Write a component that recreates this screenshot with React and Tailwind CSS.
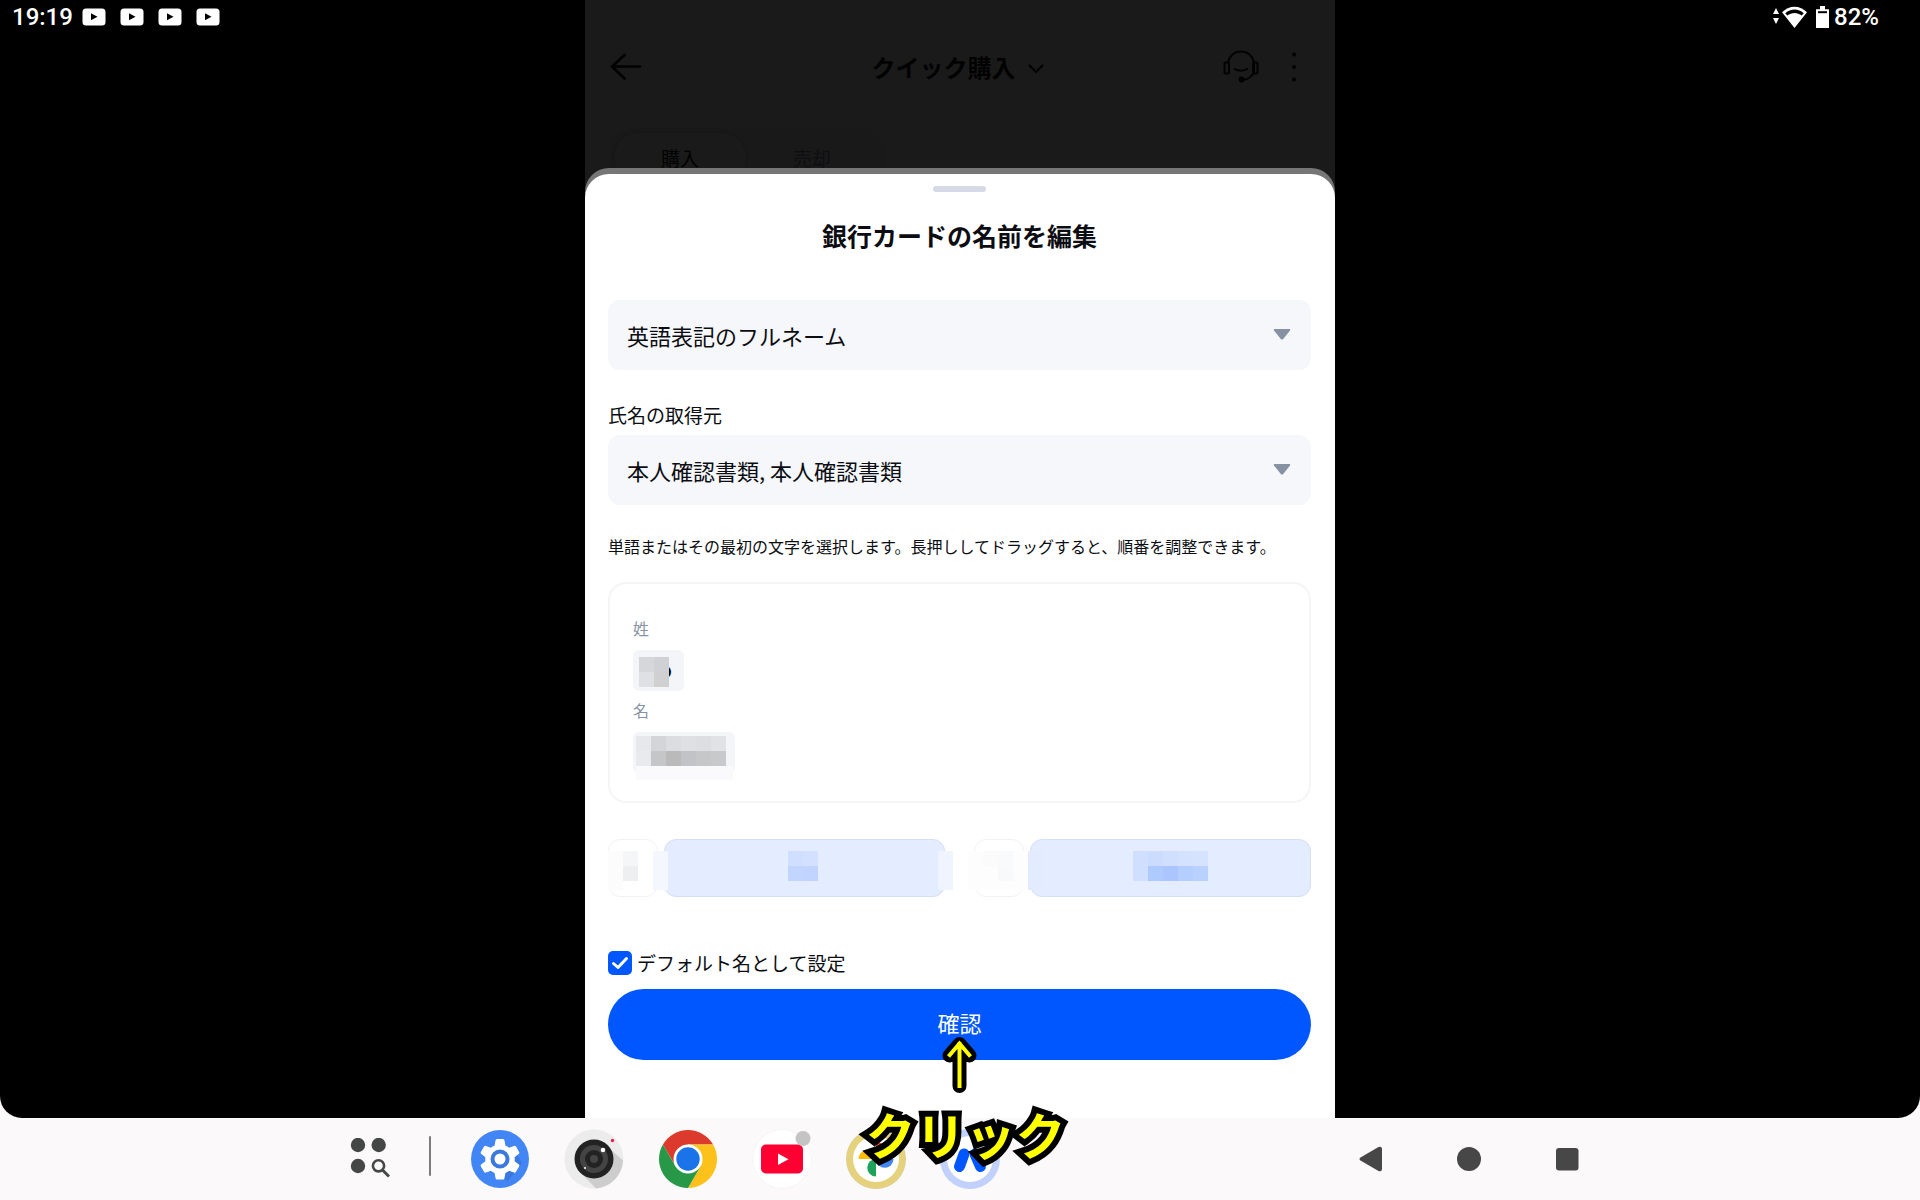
const clock = "19:19"
const battery = "82%"

// pixelated cells that hide personal data
function Mosaic({ rows, className }) {
    return (
        <span className={`absolute flex flex-col ${className}`} aria-hidden="true">
            {rows.map((row, i) => (
                <span key={i} className="flex">
                    {row.map((cell, j) => (
                        <span key={j} className={`block size-[15px] ${cell}`} />
                    ))}
                </span>
            ))}
        </span>
    )
}

function YoutubeBadge() {
    return (
        <svg width="24" height="18" viewBox="0 0 24 18">
            <rect x="0.5" y="0.5" width="23" height="17" rx="3.5" fill="#fff" />
            <path d="M9 5.2v7l6.5-3.5z" fill="#000" />
        </svg>
    )
}

function StatusBar() {
    return (
        <div className="absolute inset-x-0 top-0 z-10 flex h-[34px] items-center justify-between pl-3 pr-[41px] font-['Roboto',sans-serif] text-2xl font-medium text-white">
            <div className="flex items-center">
                <span className="mr-[9px]">{clock}</span>
                <div className="flex gap-[14px]">
                    <YoutubeBadge />
                    <YoutubeBadge />
                    <YoutubeBadge />
                    <YoutubeBadge />
                </div>
            </div>
            <div className="flex items-center">
                <svg width="57" height="24" viewBox="0 0 57 24" fill="#fff" className="mr-[5px]">
                    <path d="M4 3l3 6H1zM1 13h6l-3 6z" />
                    <path d="M10 7.3C17-.2 28-.2 35 7.3L22.5 23z" />
                    <path d="M13.3 8.2c5.5-5 13-5 18.4 0L29.7 10.5c-4.2-3.4-10.2-3.4-14.4 0z" fill="#000" />
                    <path d="M44 4.2h4V1h5v3.200h4V23H44z" />
                    <path d="M46 6.2h9v2h-9z" fill="#000" />
                </svg>
                <span>{battery}</span>
            </div>
        </div>
    )
}

function DimmedPage() {
    return (
        <div className="h-[168px] overflow-hidden pt-[33px] text-[#020202]">
            <header className="grid h-[68px] grid-cols-3 items-center pl-[25px] pr-[38px]">
                <button type="button" aria-label="戻る" className="justify-self-start">
                    <svg width="32" height="28" viewBox="0 0 32 28" fill="none" stroke="currentColor" strokeWidth="2.6" strokeLinecap="round">
                        <path d="M30 13.5H2M14.5 2L2 13.5 14.5 25.5" />
                    </svg>
                </button>
                <button type="button" className="flex items-center justify-center gap-3 whitespace-nowrap pl-2 text-2xl font-bold">
                    クイック購入
                    <svg width="16" height="10" viewBox="0 0 16 10" fill="none" stroke="currentColor" strokeWidth="2" className="mt-1">
                        <path d="M1 1l7 7 7-7" />
                    </svg>
                </button>
                <div className="flex items-center gap-[32px] justify-self-end">
                    <button type="button" aria-label="サポート">
                        <svg width="36" height="36" viewBox="0 0 36 36" fill="none" stroke="currentColor" strokeWidth="2">
                            <path d="M5 13C7 6 12 2.5 18 2.5S29 6 31 13v10c-1.5 4-5 7-11 8" />
                            <rect x="1.5" y="13.5" width="4.5" height="11" rx="1" />
                            <rect x="30" y="13.5" width="4.5" height="11" rx="1" />
                            <path d="M11 19.5c4 3 10 3 14 0" />
                            <circle cx="18.5" cy="30.5" r="3" fill="currentColor" stroke="none" />
                        </svg>
                    </button>
                    <button type="button" aria-label="メニュー">
                        <svg width="6" height="30" viewBox="0 0 6 30" fill="currentColor">
                            <circle cx="3" cy="2.5" r="2" />
                            <circle cx="3" cy="15" r="2" />
                            <circle cx="3" cy="27.5" r="2" />
                        </svg>
                    </button>
                </div>
            </header>
            <div className="ml-6 mt-[27px] flex w-[274px] rounded-[26px] bg-[#191919] p-[5px] text-[19px] leading-5">
                <button type="button" className="h-[50px] flex-1 rounded-3xl bg-[#1a1a1a] shadow-[0_0_3px_#141414]">購入</button>
                <button type="button" className="h-[50px] flex-1 text-[#0e0f11]">売却</button>
            </div>
        </div>
    )
}

function SelectField({ id, label, value }) {
    return (
        <div className="relative">
            <select id={id} aria-label={label} className="block h-[70px] w-full appearance-none rounded-xl bg-[#f6f7fa] pl-[19px] pr-14 text-[22px] text-[#0b0d12]">
                <option>{value}</option>
            </select>
            <svg width="18" height="11" viewBox="0 0 18 11" className="pointer-events-none absolute right-5 top-[29px]">
                <path d="M1.5 0h15q1.2.3.5 1.4l-7 8.8q-1 .8-2 0L1 1.4Q.3.3 1.5 0z" fill="#8691a3" />
            </svg>
        </div>
    )
}

function NameBox() {
    return (
        <section className="mt-6 rounded-[18px] border-2 border-[#f4f5f6] pb-[28px] pl-[23px] pt-8 leading-6 text-[#8a93a5]">
            <p>姓</p>
            <div className="relative mt-[10px] flex h-[41px] w-[51px] items-center justify-end rounded-md bg-[#f4f5f9] pb-[6px] pr-3 text-[22px] text-black">
                o
                <Mosaic
                    className="left-[6px] top-[7px]"
                    rows={[
                        ["bg-[#d6d7da]", "bg-[#d0d1d4]"],
                        ["bg-[#dfe0e4]", "bg-[#d0d0d1]"],
                    ]}
                />
            </div>
            <p className="mt-[7px]">名</p>
            <div className="relative mt-[10px] h-[41px] w-[102px] rounded-md bg-[#f4f5f9]">
                <span className="absolute left-[3px] top-[34px] h-[14px] w-[97px] bg-[#fafafc]" />
                <Mosaic
                    className="left-[3px] top-1"
                    rows={[
                        ["bg-[#e7e8ec]", "bg-[#d4d5d8]", "bg-[#dcdde1]", "bg-[#dfe0e4]", "bg-[#dddee2]", "bg-[#e1e2e6]"],
                        ["bg-[#e9eaee]", "bg-[#c5c6c8]", "bg-[#bababb]", "bg-[#c2c3c6]", "bg-[#c6c7c8]", "bg-[#c8c9cb]"],
                    ]}
                />
            </div>
        </section>
    )
}

function NameParts() {
    return (
        <div className="mt-9 grid grid-cols-2 gap-[29px]">
            <div className="relative flex gap-[6px]">
                <button type="button" aria-label="姓の頭文字" className="relative h-[58px] w-[50px] rounded-xl border border-[#f1f2f6]">
                    <span className="absolute -left-px top-[11px] h-[39px] w-[15px] bg-[#fcfcfd]" />
                    <Mosaic className="left-[14px] top-[11px]" rows={[["bg-[#f5f6f8]"], ["bg-[#eeeff1]"]]} />
                </button>
                <button type="button" aria-label="姓" className="relative h-[58px] flex-1 rounded-xl border border-[#d4e0f6] bg-[#e4edff]">
                    <Mosaic
                        className="left-[123px] top-[11px]"
                        rows={[
                            ["bg-[#d0deff]", "bg-[#d3e0ff]"],
                            ["bg-[#c2d5ff]", "bg-[#c0d4ff]"],
                        ]}
                    />
                </button>
                <span className="absolute left-[45px] top-3 h-[39px] w-[15px] bg-[#f4f7fe]" />
                <span className="absolute -right-2 top-3 h-[39px] w-[15px] bg-[#eff4ff]" />
            </div>
            <div className="relative flex gap-[6px]">
                <button type="button" aria-label="名の頭文字" className="h-[58px] w-[50px] rounded-xl border border-[#f1f2f6]" />
                <button type="button" aria-label="名" className="relative h-[58px] flex-1 rounded-xl border border-[#d4e0f6] bg-[#e4edff]">
                    <Mosaic
                        className="left-[102px] top-[11px]"
                        rows={[
                            ["bg-[#d0dfff]", "bg-[#cbdcff]", "bg-[#d1dfff]", "bg-[#d4e1ff]", "bg-[#d5e3ff]"],
                            ["bg-[#d0dfff]", "bg-[#afcaff]", "bg-[#abc6ff]", "bg-[#b4ceff]", "bg-[#b9d1ff]"],
                        ]}
                    />
                </button>
                <span className="absolute -left-[6px] top-3 h-[39px] w-[60px] bg-[#fdfdfd]" />
                <span className="absolute left-[54px] top-3 h-[39px] w-[15px] bg-[#e2ebff]" />
                <Mosaic
                    className="left-[9px] top-3"
                    rows={[
                        ["bg-[#fbfbfb]", "bg-[#f9fafb]"],
                        ["bg-[#fdfdfd]", "bg-[#f8f9fb]"],
                    ]}
                />
            </div>
        </div>
    )
}

function ClickHint() {
    return (
        <div className="pointer-events-none absolute left-1/2 top-[47px] z-20 flex -translate-x-1/2 flex-col items-center">
            <svg width="36" height="58" viewBox="0 0 36 58" fill="none">
                <path d="M17.5 9v41M7.5 19.5L17.5 8l10 11.5" stroke="#000" strokeWidth="14" strokeLinejoin="round" strokeLinecap="round" />
                <path d="M17.5 6v46M6.5 20.5L17.5 7.5l11 13" stroke="#ff0" strokeWidth="4" strokeLinejoin="miter" />
            </svg>
            <span className="mt-[3px] whitespace-nowrap pl-3 text-[50px] font-bold leading-[72px] text-[#ff0] [-webkit-text-stroke:12px_#000] [paint-order:stroke_fill] [stroke-linejoin:round]">
                クリック
            </span>
        </div>
    )
}

function BottomSheet() {
    return (
        <div className="flex flex-1 flex-col rounded-t-3xl bg-[#767676] pt-[6px]">
            <main className="flex-1 rounded-t-3xl bg-white pb-[58px] pl-[23px] pr-6 pt-3 text-[#0b0d12]">
                <div className="mx-auto h-1.5 w-[53px] rounded-full bg-[#d5dae6]" />
                <h1 className="mt-[25px] text-center text-[25px] font-bold leading-9">銀行カードの名前を編集</h1>

                <div className="mt-[47px]">
                    <SelectField id="name-format" label="名前の表記" value="英語表記のフルネーム" />
                </div>

                <label htmlFor="name-source" className="mb-[6px] mt-[31px] block text-[19px] leading-7">氏名の取得元</label>
                <SelectField id="name-source" value="本人確認書類, 本人確認書類" />

                <p className="mt-[29px] text-base leading-6">
                    単語またはその最初の文字を選択します。長押ししてドラッグすると、順番を調整できます。
                </p>

                <NameBox />
                <NameParts />

                <label className="relative mt-[52px] flex h-7 items-center gap-[5px] text-[19px] leading-7">
                    <input type="checkbox" defaultChecked className="size-6 appearance-none rounded-[5px] bg-[#0057ff]" />
                    <svg width="24" height="24" viewBox="0 0 24 24" fill="none" className="pointer-events-none absolute left-0 top-[2px]">
                        <path d="M5.5 12.5l4.5 4 8.5-9" stroke="#fff" strokeWidth="3" strokeLinecap="round" strokeLinejoin="round" />
                    </svg>
                    デフォルト名として設定
                </label>

                <div className="relative mt-3">
                    <button type="button" className="h-[71px] w-full rounded-full bg-[#0057ff] pb-1 text-[22px] text-white">確認</button>
                    <ClickHint />
                </div>
            </main>
        </div>
    )
}

function GearIcon() {
    return (
        <svg width="60" height="60" viewBox="0 0 60 60">
            <circle cx="30" cy="30" r="29" fill="#4285f4" />
            <path d="M44 20l8 14-14 18-12-6z" fill="#3a78df" />
            <path d="M27 10h6q1.300 0 1.500 1.500l.9 5q2 .8 3.700 2.200l4.800-1.800q1.400-.5 2.100.7l3.100 5.400q.6 1.200-.5 2.100l-4 3.100q.3 2 0 4l4 3.100q1.100.9.5 2.100L46 42.800q-.7 1.200-2.100.7l-4.800-1.800q-1.700 1.400-3.700 2.200l-.9 5Q34.300 50.400 33 50.400h-6q-1.300 0-1.500-1.500l-.9-5q-2-.8-3.700-2.200l-4.800 1.800q-1.400.5-2.100-.7l-3.100-5.400q-.6-1.200.5-2.100l4-3.100q-.3-2 0-4l-4-3.100q-1.100-.9-.5-2.100l3.100-5.400q.7-1.200 2.100-.7l4.800 1.800q1.700-1.400 3.700-2.200l.9-5Q25.700 10 27 10z" fill="#fff" />
            <circle cx="30" cy="30" r="7.500" fill="none" stroke="#3b79e0" strokeWidth="4" />
        </svg>
    )
}

function CameraIcon() {
    return (
        <svg width="60" height="60" viewBox="0 0 60 60">
            <circle cx="30" cy="30" r="29.5" fill="#ececec" />
            <path d="M44 18l15 13.500A29.500 29.500 0 0 1 32 59.400L17 44z" fill="#cdcdcd" />
            <circle cx="30" cy="30" r="19.5" fill="#222" />
            <circle cx="30" cy="30" r="14" fill="#444" />
            <circle cx="30" cy="30" r="9" fill="#222" />
            <circle cx="30" cy="30" r="4" fill="#444" />
            <circle cx="39" cy="21" r="2.3" fill="#fff" />
            <circle cx="21" cy="39" r="1" fill="#fff" />
            <circle cx="48.5" cy="11.5" r="1.7" fill="#e91e4f" />
        </svg>
    )
}

function ChromeIcon() {
    return (
        <svg width="60" height="60" viewBox="0 0 60 60">
            <path d="M4.900 15.500A29 29 0 0 1 55.100 15.500H30L17.500 37z" fill="#dc3a2d" />
            <path d="M55.100 15.500A29 29 0 0 1 30 59l12.600-21.700L30 15.500z" fill="#fcc21b" />
            <path d="M4.900 15.500A29 29 0 0 0 30 59l12.600-21.700H17.500z" fill="#279847" />
            <circle cx="30" cy="30" r="14.5" fill="#fff" />
            <circle cx="30" cy="30" r="11.7" fill="#1a73e8" />
        </svg>
    )
}

function YoutubeIcon() {
    return (
        <svg width="60" height="60" viewBox="0 0 60 60">
            <circle cx="30" cy="30" r="29.5" fill="#f0eff0" />
            <circle cx="30" cy="30" r="29" fill="#fff" />
            <rect x="9" y="15.5" width="42" height="29" rx="5" fill="#ff0033" />
            <path d="M26 24.5v11.500l10.500-5.800z" fill="#fff" />
            <circle cx="51" cy="9.500" r="7.500" fill="#c4c4c4" />
        </svg>
    )
}

function PhotosIcon() {
    return (
        <svg width="60" height="60" viewBox="0 0 60 60">
            <circle cx="30" cy="30" r="30" fill="#ddcf8c" />
            <circle cx="30" cy="30" r="29" fill="#e6d27c" />
            <circle cx="30" cy="30" r="23" fill="#fff" />
            <path d="M30 12.500a8.700 8.700 0 0 1 0 17.500z" fill="#ea4335" />
            <path d="M12.500 30a8.700 8.700 0 0 1 17.500 0z" fill="#fbbc04" />
            <path d="M30 47.500A8.700 8.700 0 0 1 30 30z" fill="#1ea35a" />
            <path d="M47.500 30A8.700 8.700 0 0 1 30 30z" fill="#4285f4" />
        </svg>
    )
}

function WalletIcon() {
    return (
        <svg width="60" height="60" viewBox="0 0 60 60">
            <circle cx="30" cy="30" r="30" fill="#c1d1fb" />
            <circle cx="30" cy="30" r="23" fill="#fff" />
            <path d="M24 25l-4.500 12.500" stroke="#0057ff" strokeWidth="11" strokeLinecap="round" />
            <path d="M35 25l5.500 12.500" stroke="#0057ff" strokeWidth="11" strokeLinecap="round" />
        </svg>
    )
}

function Taskbar() {
    return (
        <footer className="flex h-[82px] items-center justify-between bg-[#fbf9fa] pl-[350px] pr-[341px]">
            <div className="flex items-center">
                <button type="button" aria-label="アプリ一覧">
                    <svg width="40" height="42" viewBox="0 1 40 42" fill="#444746">
                        <circle cx="8" cy="8" r="7.2" />
                        <circle cx="28.7" cy="8" r="7.2" />
                        <circle cx="8" cy="29" r="7.2" />
                        <circle cx="28.5" cy="28.8" r="5.6" fill="none" stroke="#444746" strokeWidth="2.6" />
                        <path d="M32.5 33l6.5 6.500" stroke="#444746" strokeWidth="3" />
                    </svg>
                </button>
                <span className="mb-[6px] ml-[39px] h-10 w-[2px] rounded-full bg-[#7c7c7c]" />
                <nav className="ml-[39px] flex gap-[34px]">
                    <button type="button" aria-label="設定"><GearIcon /></button>
                    <button type="button" aria-label="カメラ"><CameraIcon /></button>
                    <button type="button" aria-label="Chrome"><ChromeIcon /></button>
                    <button type="button" aria-label="YouTube"><YoutubeIcon /></button>
                    <button type="button" aria-label="フォト"><PhotosIcon /></button>
                    <button type="button" aria-label="ウォレット"><WalletIcon /></button>
                </nav>
            </div>
            <div className="flex items-center gap-[74px]">
                <button type="button" aria-label="戻る">
                    <svg width="24" height="26" viewBox="0 0 24 26" fill="#474747">
                        <path d="M1.500 11.500L19.500 1Q23 0 23 3v20q0 3-3.500 2L1.500 14.500q-2-1.500 0-3z" />
                    </svg>
                </button>
                <button type="button" aria-label="ホーム">
                    <svg width="24" height="26" viewBox="0 0 24 26" fill="#474747">
                        <circle cx="12" cy="13" r="12" />
                    </svg>
                </button>
                <button type="button" aria-label="最近">
                    <svg width="24" height="26" viewBox="0 0 24 26" fill="#474747">
                        <rect x="1" y="2" width="22.5" height="22.5" rx="3" />
                    </svg>
                </button>
            </div>
        </footer>
    )
}

function App() {
    return (
        <div className="flex min-h-screen flex-col bg-[#fbf9fa] font-['Noto_Sans_CJK_JP',sans-serif]">
            <div className="relative flex flex-1 flex-col rounded-b-[22px] bg-black">
                <StatusBar />
                <div className="mx-auto flex w-full max-w-[750px] flex-1 flex-col bg-[#1a1a1a]">
                    <DimmedPage />
                    <BottomSheet />
                </div>
            </div>
            <Taskbar />
        </div>
    )
}

export default App
